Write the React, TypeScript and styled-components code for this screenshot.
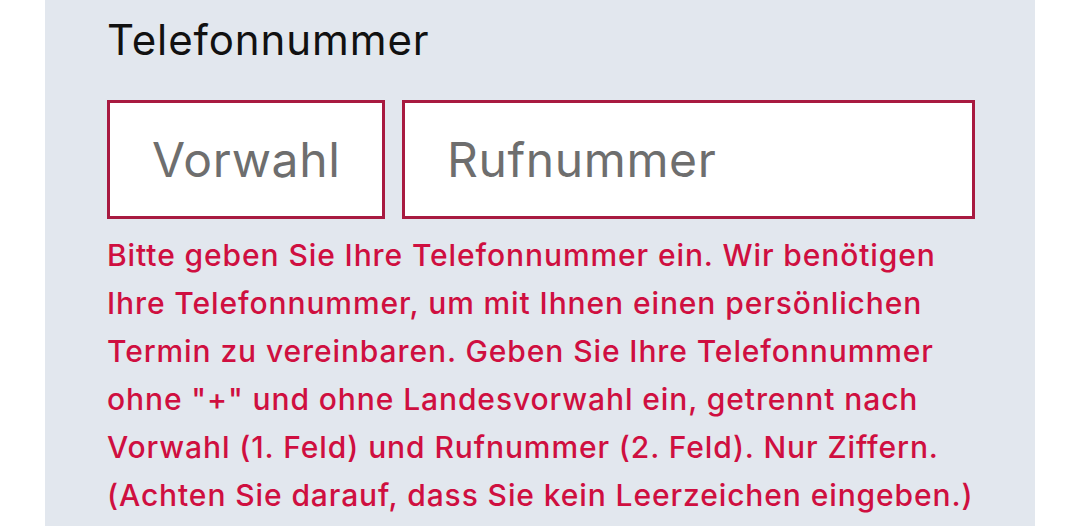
import React from 'react';
import styled, { createGlobalStyle } from 'styled-components';

const GlobalStyle = createGlobalStyle`
    html, body {
        margin: 0;
        padding: 0;
        background: #ffffff;
        overflow: hidden;
    }
    * {
        box-sizing: border-box;
    }
`;

const errorLines = [
    'Bitte geben Sie Ihre Telefonnummer ein. Wir benötigen',
    'Ihre Telefonnummer, um mit Ihnen einen persönlichen',
    'Termin zu vereinbaren. Geben Sie Ihre Telefonnummer',
    'ohne "+" und ohne Landesvorwahl ein, getrennt nach',
    'Vorwahl (1. Feld) und Rufnummer (2. Feld). Nur Ziffern.',
    '(Achten Sie darauf, dass Sie kein Leerzeichen eingeben.)',
];

function App() {
    return (
        <>
            <GlobalStyle />
            <StyledPage>
                <StyledPanel>
                    <StyledLabel>Telefonnummer</StyledLabel>
                    <StyledInputRow>
                        <StyledInput $width="278px" placeholder="Vorwahl" />
                        <StyledInput $grow placeholder="Rufnummer" />
                    </StyledInputRow>
                    <StyledError>
                        {errorLines.map((line) => (
                            <StyledErrorLine key={line}>{line} </StyledErrorLine>
                        ))}
                    </StyledError>
                </StyledPanel>
            </StyledPage>
        </>
    );
}

export default App;

const StyledPage = styled.div`
    width: 1080px;
    height: 526px;
    padding: 0 45px;
    display: flex;
`;

const StyledPanel = styled.div`
    flex: 1;
    min-width: 0;
    background-color: #e2e7ee;
    padding: 14px 60px 0 62px;
    display: flex;
    flex-direction: column;
    font-family: Inter, 'Liberation Sans', sans-serif;
`;

const StyledLabel = styled.div`
    font-size: 42px;
    line-height: 52px;
    letter-spacing: 0.9px;
    color: #111111;
`;

const StyledInputRow = styled.div`
    margin-top: 34px;
    display: flex;
    gap: 17px;
`;

const StyledInput = styled.input<{ $width?: string; $grow?: boolean }>`
    all: unset;
    box-sizing: border-box;
    min-width: 0;
    width: ${({ $width }) => $width ?? '0'};
    flex: ${({ $grow }) => ($grow ? '1 1 0' : 'none')};
    height: 119px;
    border: 3px solid #a81a40;
    background: #ffffff;
    padding: 0 20px 0 42px;
    font-family: Inter, 'Liberation Sans', sans-serif;
    font-size: 48px;
    letter-spacing: 0.6px;
    color: #222222;
    &::placeholder {
        color: #6e6e6e;
    }
`;

const StyledError = styled.p`
    margin: 12px 0 0;
    font-size: 30px;
    font-weight: 500;
    line-height: 48px;
    letter-spacing: 0.9px;
    color: #cf0f40;
`;

const StyledErrorLine = styled.span`
    display: block;
    white-space: nowrap;
`;
